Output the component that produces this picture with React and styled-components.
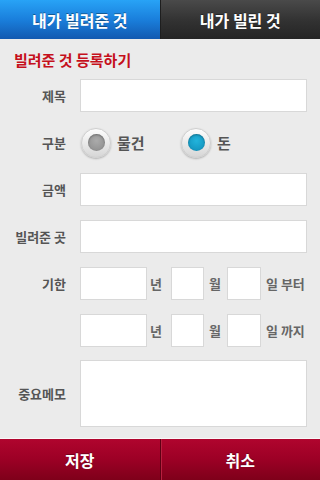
import styled, { createGlobalStyle } from "styled-components";

const GlobalStyle = createGlobalStyle`
  html, body {
    margin: 0;
    padding: 0;
    background: #ebebeb;
  }
  * {
    box-sizing: border-box;
  }
`;

// rows for the form, label on the left and its field on the right
const fields = [
  { label: "제목", type: "input" },
  { label: "구분", type: "radio" },
  { label: "금액", type: "input" },
  { label: "빌려준 곳", type: "input" },
];

const dateRows = [
  { label: "기한", end: "일 부터" },
  { label: "", end: "일 까지" },
];

const App = () => {
  return (
    <Page>
      <GlobalStyle />
      <Tabs>
        <Tab active>내가 빌려준 것</Tab>
        <Tab>내가 빌린 것</Tab>
      </Tabs>

      <Form>
        <Title>빌려준 것 등록하기</Title>

        {fields.map((f) => (
          <Row key={f.label}>
            <Label>{f.label}</Label>
            {f.type === "input" ? (
              <Field />
            ) : (
              <RadioGroup>
                <RadioItem>
                  <Radio />
                  <RadioText>물건</RadioText>
                </RadioItem>
                <RadioItem>
                  <Radio checked />
                  <RadioText>돈</RadioText>
                </RadioItem>
              </RadioGroup>
            )}
          </Row>
        ))}

        {dateRows.map((d) => (
          <Row key={d.end}>
            <Label>{d.label}</Label>
            <DateBox width={67} />
            <Unit width={24} pad={3}>년</Unit>
            <DateBox width={33} />
            <Unit width={23} pad={5}>월</Unit>
            <DateBox width={34} />
            <Unit pad={5}>{d.end}</Unit>
          </Row>
        ))}

        <Row tall>
          <Label>중요메모</Label>
          <Memo />
        </Row>
      </Form>

      <Footer>
        <FooterButton>저장</FooterButton>
        <FooterButton>취소</FooterButton>
      </Footer>
    </Page>
  );
};

export default App;

const Page = styled.div`
  width: 320px;
  height: 480px;
  display: flex;
  flex-direction: column;
  background: #ebebeb;
  font-family: "Noto Sans CJK KR", "Noto Sans", sans-serif;
  overflow: hidden;
`;

const Tabs = styled.div`
  display: flex;
  height: 39px;
  flex-shrink: 0;
`;

const Tab = styled.div`
  flex: 1;
  display: flex;
  align-items: center;
  justify-content: center;
  color: #fff;
  font-size: 16px;
  font-weight: 700;
  text-shadow: 0 -1px 0 rgba(0, 0, 0, 0.35);
  background: ${(props) =>
    props.active
      ? "linear-gradient(to bottom, #28a3f6 0%, #1a7fdc 50%, #1259b0 100%)"
      : "linear-gradient(to bottom, #4a4a4a 0%, #333 50%, #242424 100%)"};
  border-left: ${(props) => (props.active ? "none" : "1px solid #1e1e1e")};
`;

const Form = styled.div`
  flex: 1;
  display: flex;
  flex-direction: column;
  gap: 14px;
  padding: 10px 13px 0 0;
`;

const Title = styled.div`
  padding-left: 14px;
  height: 20px;
  line-height: 20px;
  margin-top: 1px;
  margin-bottom: -5px;
  color: #c5101c;
  font-size: 15px;
  font-weight: 700;
`;

const Row = styled.div`
  display: flex;
  align-items: center;
  height: ${(props) => (props.tall ? "67px" : "33px")};
  margin-top: ${(props) => (props.tall ? "-1px" : "0")};
`;

const Label = styled.div`
  width: 80px;
  flex-shrink: 0;
  padding-right: 14px;
  text-align: right;
  color: #555;
  font-size: 13px;
  font-weight: 700;
  white-space: nowrap;
`;

const Field = styled.div`
  flex: 1;
  height: 33px;
  background: #fff;
  border: 1px solid #d8d8d8;
`;

const Memo = styled(Field)`
  height: 67px;
`;

const RadioGroup = styled.div`
  display: flex;
  align-items: center;
`;

const RadioItem = styled.div`
  width: 100px;
  display: flex;
  align-items: center;
  gap: 6px;
`;

const Radio = styled.span`
  position: relative;
  width: 30px;
  height: 30px;
  margin-left: 1px;
  border-radius: 50%;
  background: linear-gradient(to bottom, #fdfdfd 0%, #e6e6e6 60%, #d6d6d6 100%);
  border: 1px solid #cfcfcf;
  box-shadow: 0 1px 2px rgba(0, 0, 0, 0.25);
  display: flex;
  align-items: center;
  justify-content: center;

  &::after {
    content: "";
    width: 17px;
    height: 17px;
    border-radius: 50%;
    background: ${(props) =>
      props.checked
        ? "radial-gradient(circle at 50% 40%, #22b4dc 0%, #1598c2 70%, #0f86ad 100%)"
        : "radial-gradient(circle at 50% 40%, #ababab 0%, #949494 70%, #858585 100%)"};
    box-shadow: inset 0 1px 2px rgba(0, 0, 0, 0.3);
  }
`;

const RadioText = styled.span`
  color: #555;
  font-size: 15px;
  font-weight: 700;
`;

const DateBox = styled.div`
  width: ${(props) => props.width}px;
  height: 33px;
  flex-shrink: 0;
  background: #fff;
  border: 1px solid #d8d8d8;
`;

const Unit = styled.span`
  width: ${(props) => (props.width ? `${props.width}px` : "auto")};
  padding-left: ${(props) => props.pad}px;
  flex-shrink: 0;
  color: #666;
  font-size: 13px;
  font-weight: 700;
  white-space: nowrap;
`;

const Footer = styled.div`
  display: flex;
  height: 42px;
  flex-shrink: 0;
  border-top: 1px solid #f8f8f8;
`;

const FooterButton = styled.div`
  flex: 1;
  display: flex;
  align-items: center;
  justify-content: center;
  color: #fff;
  font-size: 16px;
  font-weight: 700;
  text-shadow: 0 -1px 0 rgba(0, 0, 0, 0.3);
  background: linear-gradient(to bottom, #b0052e 0%, #9c0025 50%, #7e001a 100%);

  & + & {
    border-left: 1px solid #5e0014;
    box-shadow: inset 1px 0 0 #b8203f;
  }
`;
